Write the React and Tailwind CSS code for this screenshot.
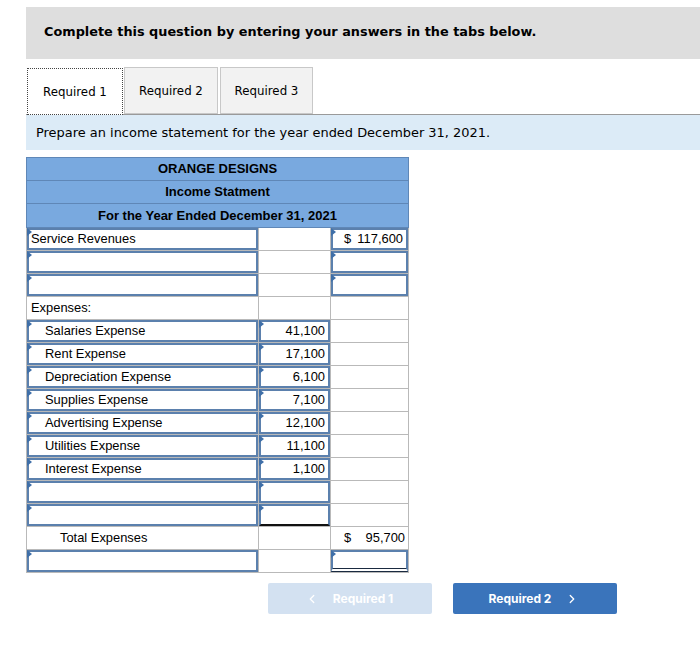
import React from 'react';
import { ChevronLeft, ChevronRight } from 'lucide-react';

const rows = [
  { a: 'Service Revenues', ai: true, bi: false, c: '117,600', cd: true, ci: true, indent: 0 },
  { a: '', ai: true, bi: false, ci: true },
  { a: '', ai: true, bi: false, ci: true },
  { a: 'Expenses:', ai: false, bi: false, ci: false, indent: 0 },
  { a: 'Salaries Expense', ai: true, b: '41,100', bi: true, ci: false, indent: 1 },
  { a: 'Rent Expense', ai: true, b: '17,100', bi: true, ci: false, indent: 1 },
  { a: 'Depreciation Expense', ai: true, b: '6,100', bi: true, ci: false, indent: 1 },
  { a: 'Supplies Expense', ai: true, b: '7,100', bi: true, ci: false, indent: 1 },
  { a: 'Advertising Expense', ai: true, b: '12,100', bi: true, ci: false, indent: 1 },
  { a: 'Utilities Expense', ai: true, b: '11,100', bi: true, ci: false, indent: 1 },
  { a: 'Interest Expense', ai: true, b: '1,100', bi: true, ci: false, indent: 1 },
  { a: '', ai: true, bi: true, ci: false },
  { a: '', ai: true, bi: true, ci: false, bLine: true },
  { a: 'Total Expenses', ai: false, bi: false, c: '95,700', cd: true, ci: false, indent: 2 },
  { a: '', ai: true, bi: false, ci: true, cDouble: true },
];

function Marker() {
  return (
    <span className="absolute left-0 top-0 w-0 h-0 border-t-[4px] border-b-[4px] border-l-[5px] border-t-transparent border-b-transparent border-l-[#3f6fa8]" />
  );
}

function Cell({ width, input, children, align = 'left', indent = 0, extra = '' }) {
  let pad = 'pl-[4px]';
  if (align === 'right') pad = 'justify-end pr-[3px]';
  else if (align === 'none') pad = '';
  else if (indent === 1) pad = input ? 'pl-[16px]' : 'pl-[18px]';
  else if (indent === 2) pad = 'pl-[33px]';
  else pad = input ? 'pl-[2px]' : 'pl-[4px]';
  return (
    <div className={`relative h-[23px] border-r border-b border-[#b9b9b9] ${width}`}>
      <div
        className={`h-full w-full flex items-center ${pad} ${input ? 'border-2 border-[#5b80ad]' : ''} ${extra}`}
      >
        {children}
      </div>
      {input && <Marker />}
    </div>
  );
}

function Dollar({ value, input }) {
  return (
    <div className={`flex w-full justify-between pr-[3px] ${input ? 'pl-[11px]' : 'pl-[13px]'}`}>
      <span>$</span>
      <span>{value}</span>
    </div>
  );
}

export default function App() {
  return (
    <div className="w-[700px] h-[645px] bg-white pt-[7px] pl-[26px] font-['DejaVu_Sans',sans-serif] text-black">
      <div className="h-[52px] bg-[#dedede] flex items-center pl-[18px] pb-[3px]">
        <span className="font-bold text-[12.85px]">Complete this question by entering your answers in the tabs below.</span>
      </div>

      <div className="mt-[8px] flex items-end h-[48px] border-b border-[#9a9a9a]">
        <div className="h-[47px] w-[96px] ml-[1px] bg-white border border-dotted border-[#444] flex items-center justify-center text-[11.8px] -mb-px pt-[3px]">
          Required 1
        </div>
        <div className="h-[47px] w-[94px] ml-[1px] bg-[#f2f2f2] border border-[#c8c8c8] flex items-center justify-center text-[11.8px] pt-[3px]">
          Required 2
        </div>
        <div className="h-[47px] w-[93px] ml-[2px] bg-[#f2f2f2] border border-[#c8c8c8] flex items-center justify-center text-[11.8px] pt-[3px]">
          Required 3
        </div>
      </div>

      <div className="h-[35px] bg-[#dcebf7] flex items-center pl-[10px] text-[12.95px]">
        Prepare an income statement for the year ended December 31, 2021.
      </div>

      <div className="mt-[7px] w-[383px] font-['Liberation_Sans',Arial,sans-serif] text-[12.9px]">
        <div className="bg-[#79a9df] border border-[#5f87b7] font-bold text-[13px]">
          <div className="h-[23px] flex items-center justify-center border-b border-[#5f87b7]">ORANGE DESIGNS</div>
          <div className="h-[23px] flex items-center justify-center border-b border-[#5f87b7]">Income Statment</div>
          <div className="h-[23px] flex items-center justify-center">For the Year Ended December 31, 2021</div>
        </div>
        <div className="border-l border-[#b9b9b9]">
          {rows.map((r, i) => (
            <div key={i} className="flex">
              <Cell width="w-[232px]" input={r.ai} indent={r.indent}>
                {r.a}
              </Cell>
              <Cell width="w-[72px]" input={r.bi} align="right" extra={r.bLine ? 'border-b-[#111]' : ''}>
                {r.b}
              </Cell>
              <Cell
                width="w-[78px]"
                input={r.ci}
                align={r.cd ? 'none' : 'right'}
                extra={r.cDouble ? 'border-b-[4px] border-b-[#1a2a40] border-double' : ''}
              >
                {r.cd ? <Dollar value={r.c} input={r.ci} /> : r.c}
              </Cell>
            </div>
          ))}
        </div>
      </div>

      <div className="mt-[10px] flex gap-[21px] pl-[242px] font-['Inter',sans-serif] font-bold text-[12px] text-white">
        <div className="h-[31px] w-[164px] rounded-[2px] bg-[#d3e1f1] flex items-center justify-center gap-[14px] pr-[2px]">
          <ChevronLeft size={14} strokeWidth={2.2} />
          <span>Required 1</span>
        </div>
        <div className="h-[31px] w-[164px] rounded-[2px] bg-[#3a74bb] flex items-center justify-center gap-[14px] pr-[2px]">
          <span>Required 2</span>
          <ChevronRight size={14} strokeWidth={2.2} />
        </div>
      </div>
    </div>
  );
}
